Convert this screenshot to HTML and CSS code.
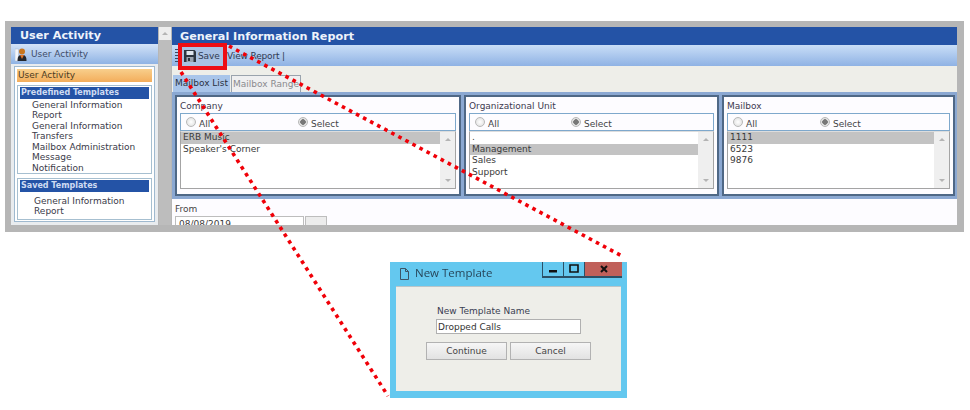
FILE: index.html
```html
<!DOCTYPE html>
<html lang="en">
<head>
<meta charset="utf-8">
<title>General Information Report</title>
<link rel="stylesheet" href="styles.css">
</head>
<body>
<div class="page">
  <section class="frame">
    <aside class="sidebar">
      <h2 class="bar-title side-title">User Activity</h2>
      <div class="side-sub">
        <svg class="person" viewBox="0 0 12 15" width="12" height="15"><rect x="0" y="2" width="3.500" height="12" fill="#f4f6fa" stroke="#aab6c8" stroke-width=".5"/><circle cx="7" cy="4.500" r="3" fill="#c9761f"/><path d="M2.500 14c0-5 1.500-6 4.500-6s4.500 1 4.500 6z" fill="#24262c"/><path d="M5 8l2 4 2-4z" fill="#e0742a"/></svg>
        <span>User Activity</span>
      </div>
      <div class="side-body">
        <div class="side-box">
          <div class="side-active">User Activity</div>
          <div class="group">
            <div class="group-head">Predefined Templates</div>
            <ul class="group-list">
              <li>General Information</li><li>Report</li><li>General Information</li><li>Transfers</li><li>Mailbox Administration</li><li>Message</li><li>Notification</li>
            </ul>
          </div>
          <div class="group saved-group">
            <div class="group-head">Saved Templates</div>
            <ul class="group-list saved">
              <li>General Information</li><li>Report</li>
            </ul>
          </div>
        </div>
      </div>
    </aside>
    <div class="side-scroll"><div class="scroll-btn"><i class="arrow up"></i></div></div>
    <main class="main">
      <h1 class="bar-title main-title">General Information Report</h1>
      <div class="toolbar">
        <span class="grip"></span>
        <span class="save">
          <svg viewBox="0 0 12 12" width="12" height="12"><path d="M0 0h10.500L12 1.500V12H0z" fill="#2c3440"/><rect x="2.500" y="1" width="7" height="4" fill="#dfe5ee"/><rect x="2.500" y="7" width="7" height="5" fill="#9aa3b0"/><rect x="4" y="8" width="2" height="3" fill="#2c3440"/></svg>
          Save
        </span>
        <span class="view">View Report |</span>
      </div>
      <div class="tabs">
        <span class="tab active">Mailbox List</span>
        <span class="tab">Mailbox Range</span>
      </div>
      <div class="panels">
        <div class="panel">
          <div class="panel-label">Company</div>
          <div class="radios co"><span class="radio"><i></i>All</span><span class="radio on"><i></i>Select</span></div>
          <div class="list">
            <ul><li class="sel">ERB Music</li><li>Speaker's Corner</li></ul>
            <div class="list-scroll"><i class="arrow up"></i><i class="arrow down"></i></div>
          </div>
        </div>
        <div class="panel">
          <div class="panel-label">Organizational Unit</div>
          <div class="radios ou"><span class="radio"><i></i>All</span><span class="radio on"><i></i>Select</span></div>
          <div class="list">
            <ul><li>.</li><li class="sel">Management</li><li>Sales</li><li>Support</li></ul>
            <div class="list-scroll"><i class="arrow up"></i><i class="arrow down"></i></div>
          </div>
        </div>
        <div class="panel">
          <div class="panel-label">Mailbox</div>
          <div class="radios mb"><span class="radio"><i></i>All</span><span class="radio on"><i></i>Select</span></div>
          <div class="list">
            <ul><li class="sel">1111</li><li>6523</li><li>9876</li></ul>
            <div class="list-scroll"><i class="arrow up"></i><i class="arrow down"></i></div>
          </div>
        </div>
      </div>
      <div class="from">
        <div class="from-label">From</div>
        <div class="from-row"><span class="from-input">08/08/2019</span><span class="from-btn"></span></div>
      </div>
    </main>
  </section>

  <section class="dialog">
    <header class="dialog-bar">
      <svg class="doc" viewBox="0 0 9 12" width="9" height="12"><path d="M.5.500h5l3 3v8h-8zM5.500.500v3h3" fill="none" stroke="#3c5566" stroke-width="1"/></svg>
      <span class="dialog-title">New Template</span>
      <div class="win-btns">
        <span class="win-btn"><svg viewBox="0 0 10 10" width="10" height="10"><rect x="1" y="6" width="8" height="2.500" fill="#111"/></svg></span>
        <span class="win-btn"><svg viewBox="0 0 10 10" width="10" height="10"><path d="M1 1h8v7H1z" fill="none" stroke="#111" stroke-width="1.600"/></svg></span>
        <span class="win-btn close"><svg viewBox="0 0 10 10" width="10" height="10"><path d="M2 2l6 6M8 2l-6 6" stroke="#111" stroke-width="2"/></svg></span>
      </div>
    </header>
    <div class="dialog-body">
      <label class="name-label">New Template Name</label>
      <div class="name-input">Dropped Calls</div>
      <div class="dialog-actions"><span class="btn">Continue</span><span class="btn">Cancel</span></div>
    </div>
  </section>

  <svg class="callout" viewBox="0 0 970 410" width="970" height="410">
    <rect x="180" y="45" width="45" height="23" fill="none" stroke="#ee0d14" stroke-width="4"/>
    <path d="M229 46L622 256M181 72L388 396" fill="none" stroke="#f00008" stroke-width="3.600" stroke-dasharray="3.600 4.400"/>
  </svg>
</div>
</body>
</html>
```
FILE: styles.css
```css
* { box-sizing: border-box; }
html, body { margin: 0; padding: 0; background: #fff; }
body { font-family: "DejaVu Sans", Verdana, sans-serif; font-size: 9px; color: #333; }
ul { list-style: none; margin: 0; padding: 0; }
h1, h2 { margin: 0; }
.page { position: relative; width: 970px; height: 410px; overflow: hidden; padding-top: 21px; filter: blur(.45px); }

.frame { display: grid; grid-template-columns: 147px 12px 1fr; column-gap: 1px; width: 959px; height: 211px; margin-left: 5px; padding: 6px 7px 7px 6px; background: #b6b6b6; overflow: hidden; }
.sidebar, .main { height: 198px; overflow: hidden; }
.sidebar { background: #e9ecef; }
.main { background: #fdfcff; }

.bar-title { height: 18px; padding: 1px 0 0 9px; background: #2453a6; color: #eef3fb; font-size: 11.200px; line-height: 17px; font-weight: 700; }
.side-title { height: 17px; padding-top: 0; }
.main-title { padding-left: 8px; }

.side-sub { display: flex; align-items: center; gap: 4px; height: 20px; padding-left: 4px; background: linear-gradient(#d3e3f8, #8fb3e4); color: #3f4d6a; }
.side-body { padding: 2px 3px; }
.side-box { height: 156px; padding: 2px; border: 1px solid #9fb9cf; background: #fff; }
.side-active { height: 13px; padding-left: 1px; line-height: 13px; background: linear-gradient(#f8cf8c, #f3ad5b); color: #4d3b22; }
.group { height: 89px; margin-top: 3px; padding: 1px 2px; border: 1px solid #a6bfd0; }
.saved-group { height: 42px; margin-top: 4px; }
.group-head { height: 12px; padding-left: 1px; line-height: 11px; font-weight: 700; font-size: 8px; background: #2453a6; color: #cfdcf3; }
.group-list { padding: 1px 0 0 12px; line-height: 10.450px; color: #3a3a48; }
.group-list.saved { padding: 4px 0 0 14px; }

.side-scroll { background: #bdbdbd; }
.scroll-btn { display: flex; justify-content: center; align-items: center; height: 13px; background: #ededed; }
.arrow { display: block; width: 0; height: 0; border-left: 3px solid transparent; border-right: 3px solid transparent; }
.arrow.up { border-bottom: 3px solid #b4b4b4; }
.arrow.down { border-top: 3px solid #b4b4b4; }

.toolbar { display: flex; align-items: center; height: 21px; padding-left: 3px; background: linear-gradient(#c9def7, #8fb2e4); color: #2f3a52; }
.grip { width: 3px; height: 13px; margin-right: 4px; background: repeating-linear-gradient(#3a4a62 0 1px, transparent 1px 3px); }
.save { display: flex; align-items: center; gap: 2px; width: 42px; height: 20px; padding-left: 2px; background: #a9c1e3; letter-spacing: -.1px; }
.view { margin-left: 3px; letter-spacing: -.15px; }

.tabs { display: flex; align-items: flex-end; gap: 1px; height: 26px; padding-left: 1px; background: #eeeee9; }
.tab { height: 17px; padding: 0 1px; line-height: 17px; width: 70px; border: 1px solid #9aa3ad; border-bottom: 0; background: #efeff0; color: #8a8a8e; text-align: center; }
.tab.active { width: 57px; border: 0; background: #a9c5ea; color: #2b3242; }

.panels { display: grid; grid-template-columns: 286px 255px 233px; column-gap: 3px; height: 107px; padding: 3px 2px 3px 3px; background: #8ba8d2; }
.panel { height: 101px; padding: 3px 3px 0 3px; border: 2px solid #4f6886; background: #fdfcff; }
.panel-label { height: 13px; line-height: 13px; color: #3d3a4f; }
.radios { display: flex; height: 18px; padding-top: 4px; border: 1px solid #7ea8cc; }
.radio { display: flex; align-items: center; gap: 3px; height: 12px; color: #444; }
.radio i { width: 10px; height: 10px; margin-top: -4px; border-radius: 50%; border: 1px solid #b8b8b8; background: radial-gradient(#fff, #dcdcdc); }
.radio.on i { background: radial-gradient(#777 0 2.500px, #e4e4e4 3px); }
.co .radio:first-child { margin-left: 5px; width: 112px; }
.ou .radio:first-child { margin-left: 5px; width: 96px; }
.mb .radio:first-child { margin-left: 5px; width: 87px; }

.list { display: flex; height: 58px; border: 1px solid #a4a4a4; border-top-color: #ddd; background: #fff; }
.list ul { flex: 1; line-height: 11.700px; color: #3a3a3a; }
.list li { height: 11.700px; padding-left: 2px; }
.list li.sel { background: #c3c3c3; }
.list-scroll { display: flex; flex-direction: column; justify-content: space-between; align-items: center; width: 15px; padding: 6px 0 6px; background: #efefef; }

.from { height: 26px; padding-left: 3px; background: #fdfcff; }
.from-label { height: 17px; padding-top: 5px; line-height: 11px; color: #444; }
.from-row { display: flex; gap: 1px; }
.from-input { width: 129px; height: 20px; padding-left: 3px; line-height: 15px; border: 1px solid #bdbdbd; background: #fff; color: #3a3a3a; }
.from-btn { width: 22px; height: 20px; border: 1px solid #bdbdbd; background: #ececec; }

.dialog { display: flex; flex-direction: column; width: 237px; height: 136px; margin: 30px 0 0 390px; padding: 0 6px 7px; background: #64c8ef; }
.dialog-bar { display: flex; align-items: flex-start; height: 24px; color: #27465a; }
.doc { margin: 6px 6px 0 4px; }
.dialog-title { margin-top: 2px; font-family: "Open Sans", sans-serif; font-size: 11.500px; line-height: 17px; }
.win-btns { display: flex; margin-left: auto; margin-right: -1px; height: 16px; border: 1px solid #2b5066; border-top: 0; border-right: 0; border-bottom-width: 2px; }
.win-btn { display: flex; align-items: center; justify-content: center; width: 21px; border-right: 1px solid #2b5066; }
.win-btn.close { width: 37px; background: #c0605a; border-right: 0; }
.dialog-body { flex: 1; display: flex; flex-direction: column; padding: 19px 0 0 40px; background: #eeeee9; border-top: 1px solid #b9c5c9; }
.name-label { height: 13px; padding-left: 1px; line-height: 11px; color: #3a4052; }
.name-input { width: 145px; height: 15px; padding-left: 1px; line-height: 14px; border: 1px solid #b0b0b0; background: #fff; color: #333; }
.dialog-actions { display: flex; gap: 3px; margin: 8px 0 0 -10px; }
.btn { width: 81px; height: 18px; border: 1px solid #b2b2b2; background: linear-gradient(#f6f6f6, #e2e2e2); text-align: center; line-height: 17px; color: #444; }

.callout { position: absolute; left: 0; top: 0; pointer-events: none; }
```
